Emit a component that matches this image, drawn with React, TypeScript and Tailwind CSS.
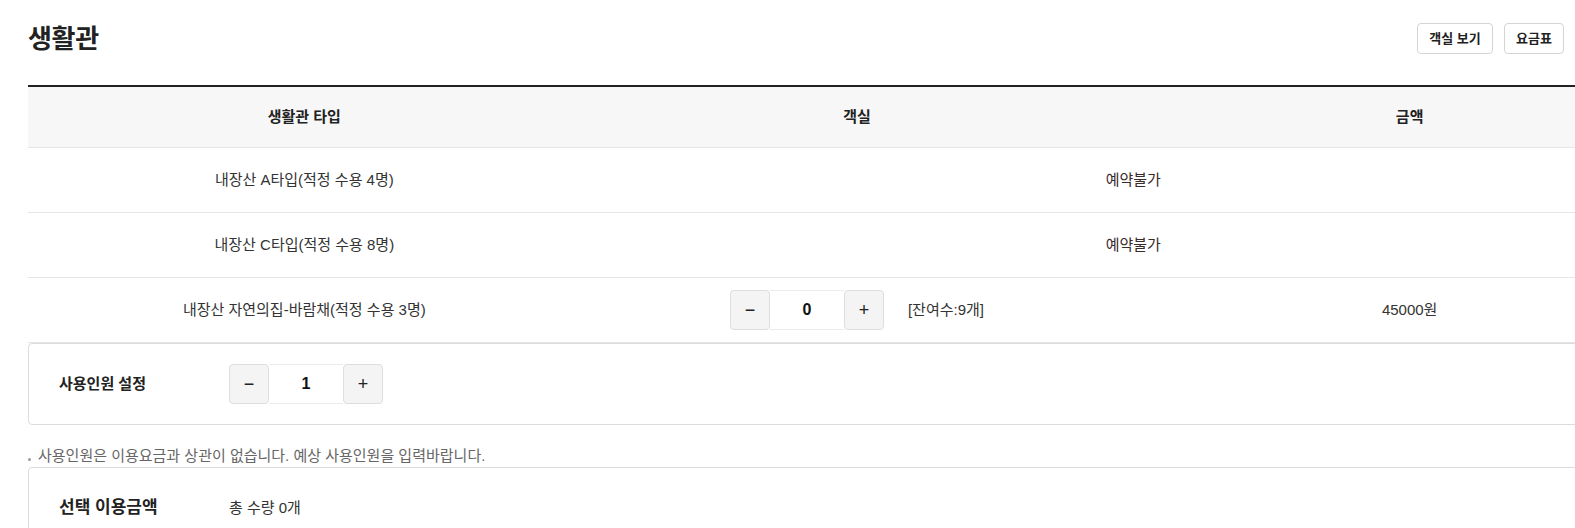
import { useState } from 'react';

const font = { fontFamily: '"Liberation Sans", "Noto Sans CJK KR", sans-serif' };

interface Room {
  name: string;
  available: boolean;
  remain?: number;
  price?: number;
}

const rooms: Room[] = [
  { name: '내장산 A타입(적정 수용 4명)', available: false },
  { name: '내장산 C타입(적정 수용 8명)', available: false },
  { name: '내장산 자연의집-바람채(적정 수용 3명)', available: true, remain: 9, price: 45000 },
];

function Stepper({ value, onChange, min = 0 }: { value: number; onChange: (v: number) => void; min?: number }) {
  return (
    <div className="flex h-[40px] items-stretch">
      <button
        className="w-[40px] rounded-[4px] border border-[#dedede] bg-[#f4f4f4] text-[18px] leading-none text-[#222]"
        onClick={() => onChange(Math.max(min, value - 1))}
      >
        −
      </button>
      <div className="flex w-[74px] items-center justify-center border-y border-[#ececec] text-[16px] font-semibold text-[#111]">
        {value}
      </div>
      <button
        className="w-[40px] rounded-[4px] border border-[#dedede] bg-[#f4f4f4] text-[18px] leading-none text-[#222]"
        onClick={() => onChange(value + 1)}
      >
        +
      </button>
    </div>
  );
}

export default function App() {
  const [qty, setQty] = useState(0);
  const [people, setPeople] = useState(1);

  return (
    <div className="min-h-[528px] w-full overflow-hidden bg-white text-[#333]" style={font}>
      <div className="pl-[28px] pr-[11px]">
        {/* header */}
        <div className="flex h-[77px] items-center justify-between">
          <h1 className="pt-[1px] text-[26px] font-bold leading-none tracking-[-0.3px] text-[#222]">생활관</h1>
          <div className="flex gap-[11px]">
            <button className="h-[31px] w-[76px] rounded-[4px] border border-[#d5d5d5] bg-white text-[13px] font-bold text-[#222]">
              객실 보기
            </button>
            <button className="h-[31px] w-[60px] rounded-[4px] border border-[#d5d5d5] bg-white text-[13px] font-bold text-[#222]">
              요금표
            </button>
          </div>
        </div>
      </div>

      <div className="mt-[8px] w-[1686px] pl-[28px]">
        {/* table */}
        <div className="border-t-2 border-[#222]">
          <div className="grid h-[61px] grid-cols-3 items-center border-b border-[#e6e6e6] bg-[#f7f7f7] text-center text-[15px] font-bold text-[#222]">
            <div>생활관 타입</div>
            <div>객실</div>
            <div>금액</div>
          </div>
          {rooms.map((r) => (
            <div key={r.name} className="grid h-[65px] grid-cols-3 items-center border-b border-[#e6e6e6] text-center text-[15px]">
              <div>{r.name}</div>
              {r.available ? (
                <>
                  <div className="flex items-center justify-center gap-[24px]">
                    <Stepper value={qty} onChange={setQty} />
                    <span>[잔여수:{r.remain}개]</span>
                  </div>
                  <div>{r.price}원</div>
                </>
              ) : (
                <div className="col-span-2 text-[#3a2a2a]">예약불가</div>
              )}
            </div>
          ))}
        </div>

        {/* people */}
        <div className="flex h-[82px] items-center rounded-[4px] border border-[#dcdcdc] px-[30px]">
          <div className="w-[170px] text-[15px] font-bold text-[#222]">사용인원 설정</div>
          <Stepper value={people} onChange={setPeople} min={1} />
        </div>

        <div className="mt-[21px] flex h-[20px] items-center text-[15px] text-[#666]">
          <span className="mr-[7px] mt-[6px] h-[3px] w-[3px] rounded-full bg-[#999]" />
          사용인원은 이용요금과 상관이 없습니다. 예상 사용인원을 입력바랍니다.
        </div>

        {/* total */}
        <div className="mt-[1px] rounded-[4px] border border-[#dcdcdc] px-[30px] pb-[30px] pt-[27px]">
          <div className="flex items-center">
            <div className="w-[170px] text-[17px] font-bold text-[#222]">선택 이용금액</div>
            <div className="text-[15px]">총 수량 {qty}개</div>
          </div>
        </div>
      </div>
    </div>
  );
}
